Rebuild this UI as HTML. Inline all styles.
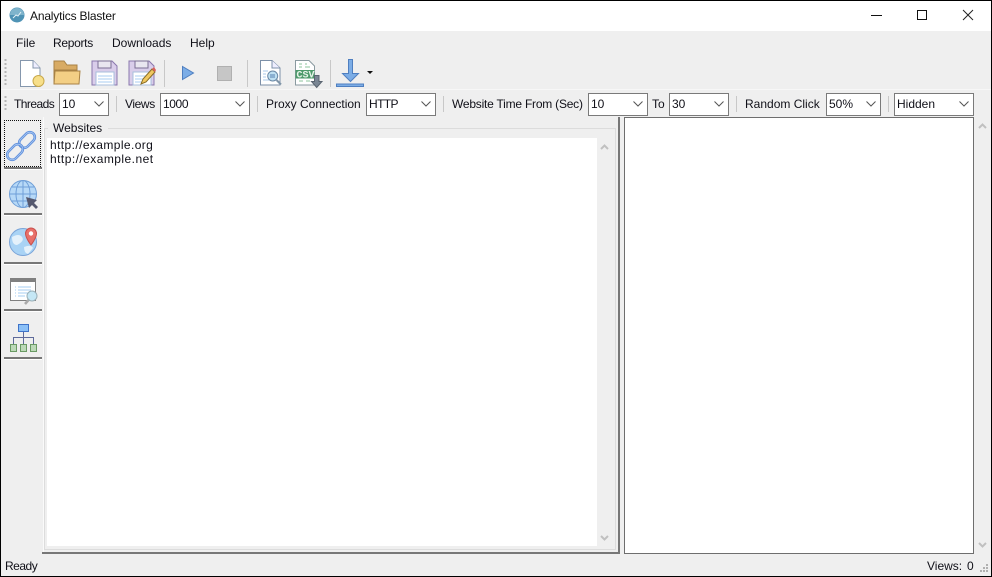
<!DOCTYPE html>
<html><head><meta charset="utf-8"><style>
html,body{margin:0;padding:0;background:#f0f0f0;overflow:hidden}
#w{position:relative;width:992px;height:577px;background:#efefef;overflow:hidden;font-family:"Liberation Sans",sans-serif;font-size:12px;color:#101018}
.t{position:absolute;white-space:nowrap;line-height:14px}
.a{position:absolute}
.c{position:absolute;top:93px;height:21px;border:1px solid #7a7a7a;background:#fff;box-sizing:content-box}
.c span{position:absolute;left:2px;top:3px;line-height:14px;white-space:nowrap}
.c svg{position:absolute;right:4px;top:7px}
.sep{position:absolute;width:1px;background:#c8c8c8}
svg{position:absolute;overflow:visible}
.sb{position:absolute;left:4px;width:38px;height:2px;background:#777;border-bottom:1px solid #fff}
</style></head><body><div id="w">
<div class="a" style="left:0;top:0;width:992px;height:31px;background:#fff"></div>
<svg style="left:9px;top:7px" width="16" height="16"><circle cx="8" cy="8" r="7.5" fill="#4f93b5"/><path d="M1 8a7 7 0 0 1 14 0z" fill="#7fb4cc"/><path d="M4 11l3-3 2 1 3-4" stroke="#e6f2f7" fill="none"/></svg>
<div class="t" style="left:30px;top:9px;color:#111;letter-spacing:-0.18px">Analytics Blaster</div>
<div class="a" style="left:871px;top:15px;width:11px;height:1px;background:#111"></div>
<div class="a" style="left:917px;top:10px;width:8px;height:8px;border:1px solid #111"></div>
<svg style="left:963px;top:10px" width="10" height="10"><path d="M0 0L10 10M10 0L0 10" stroke="#222"/></svg>

<div class="t" style="left:16px;top:36px">File</div>
<div class="t" style="left:53px;top:36px;letter-spacing:-0.3px">Reports</div>
<div class="t" style="left:112px;top:36px">Downloads</div>
<div class="t" style="left:190px;top:36px">Help</div>

<svg style="left:4px;top:58px" width="3" height="30"><path d="M1.5 1V29" stroke="#b5b5b5" stroke-width="2" stroke-dasharray="2 2"/></svg>
<svg style="left:4px;top:96px" width="3" height="16"><path d="M1.5 0V16" stroke="#b5b5b5" stroke-width="2" stroke-dasharray="2 2"/></svg>

<!-- new -->
<svg style="left:20px;top:60px" width="26" height="28"><path d="M0.5 0.5H13L20 8V26.500H0.500z" fill="#fff" stroke="#8597ad"/><path d="M13 0.500V8H20" fill="#eef" stroke="#8597ad"/><circle cx="18.500" cy="21" r="5.500" fill="#f7df8a" stroke="#c9a94a"/></svg>
<!-- open -->
<svg style="left:53px;top:60px" width="28" height="26"><path d="M1 24V1H11L14 5H24V10H1z" fill="#d8ab64" stroke="#a88245"/><path d="M1 24L2 11H27L26 24z" fill="#f3cf85" stroke="#a88245"/></svg>
<!-- save -->
<svg style="left:91px;top:60px" width="27" height="26"><path d="M1 1H21L26 6V25H1z" fill="#d9cdea" stroke="#8a78ad"/><rect x="7" y="1" width="13" height="7" fill="#e9e6f0" stroke="#7a6e94"/><rect x="5" y="12" width="18" height="13" fill="#fff" stroke="#a8bfdc"/><path d="M7 16H21M7 19H21M7 22H21" stroke="#a8cdf0"/></svg>
<!-- save as -->
<svg style="left:128px;top:60px" width="29" height="27"><path d="M1 1H21L26 6V25H1z" fill="#d9cdea" stroke="#8a78ad"/><rect x="7" y="1" width="13" height="7" fill="#e9e6f0" stroke="#7a6e94"/><rect x="5" y="12" width="18" height="13" fill="#fff" stroke="#a8bfdc"/><path d="M7 16H21M7 19H21M7 22H17" stroke="#a8cdf0"/><path d="M13 24L15 19L24 9L27 12L18 22z" fill="#f0c860" stroke="#8a6d25"/><path d="M24 9L26 7L28 10L27 12z" fill="#d9605a"/></svg>
<div class="sep" style="left:164px;top:60px;height:27px"></div>
<svg style="left:182px;top:66px" width="12" height="14"><path d="M0.5 0.5V13.5L11.5 7z" fill="#7cade6" stroke="#4f7fc0"/></svg>
<div class="a" style="left:217px;top:66px;width:13px;height:13px;background:#c6c6c6;border:1px solid #b0b0b0"></div>
<div class="sep" style="left:247px;top:60px;height:27px"></div>
<!-- report view -->
<svg style="left:260px;top:60px" width="22" height="26"><path d="M0.500 0.500H12L20 8V25H0.500z" fill="#fff" stroke="#7d90a8"/><path d="M12 0.500V8H20" fill="#eef" stroke="#7d90a8"/><path d="M3 11H8M3 14H6M3 17H6M3 20H9" stroke="#a8c8ea"/><circle cx="12.700" cy="16" r="5" fill="#bfe0f2" stroke="#6a88a5"/><path d="M10 15H15M10 17H15" stroke="#5580b0"/><path d="M16.500 20L21 24.500" stroke="#8095a8" stroke-width="2"/></svg>
<!-- csv -->
<svg style="left:295px;top:60px" width="28" height="28"><path d="M0.500 0.500H14L19.500 6V25H0.500z" fill="#fff" stroke="#8a9aa0"/><rect x="0.500" y="10" width="19" height="8.500" fill="#4d9a6a"/><path d="M4 4H7M10 4H12M4 7H7M10 7H15M4 21H8M11 21H15" stroke="#8cc49c"/><text x="1.500" y="17.500" font-family="Liberation Mono,monospace" font-size="10" font-weight="bold" fill="#e8f5ea">CSV</text><path d="M19.500 15.500H24V21.500H27L21.700 27.500L16.500 21.500H19.500z" fill="#7a8694" stroke="#5a6470"/></svg>
<div class="sep" style="left:330px;top:60px;height:27px"></div>
<!-- download -->
<svg style="left:336px;top:59px" width="38" height="28"><path d="M12.5 0.5H16.5V14.5H22.5L14.500 22.5L6.5 14.500H12.500z" fill="#7cade6" stroke="#4f7fc0"/><rect x="0.5" y="25" width="27" height="2.500" fill="#7cade6" stroke="#4f7fc0"/><path d="M31 12H37L34 15z" fill="#111"/></svg>

<div class="a" style="left:0;top:89px;width:992px;height:1px;background:#f7f7f7"></div>
<div class="t" style="left:14px;top:97px;letter-spacing:-0.55px">Threads</div>
<div class="c" style="left:59px;width:48px"><span>10</span><svg width="10" height="6"><path d="M0.500 0.500L5 5L9.500 0.500" stroke="#555" fill="none"/></svg></div>
<div class="sep" style="left:116px;top:96px;height:16px"></div>
<div class="t" style="left:125px;top:97px;letter-spacing:-0.4px">Views</div>
<div class="c" style="left:160px;width:88px"><span style="letter-spacing:-0.4px">1000</span><svg width="10" height="6"><path d="M0.500 0.500L5 5L9.500 0.500" stroke="#555" fill="none"/></svg></div>
<div class="sep" style="left:257px;top:96px;height:16px"></div>
<div class="t" style="left:266px;top:97px">Proxy Connection</div>
<div class="c" style="left:366px;width:68px"><span style="letter-spacing:-0.6px">HTTP</span><svg width="10" height="6"><path d="M0.500 0.500L5 5L9.500 0.500" stroke="#555" fill="none"/></svg></div>
<div class="sep" style="left:443px;top:96px;height:16px"></div>
<div class="t" style="left:452px;top:97px;letter-spacing:-0.22px">Website Time From (Sec)</div>
<div class="c" style="left:588px;width:58px"><span>10</span><svg width="10" height="6"><path d="M0.500 0.500L5 5L9.500 0.500" stroke="#555" fill="none"/></svg></div>
<div class="t" style="left:652px;top:97px">To</div>
<div class="c" style="left:669px;width:58px"><span>30</span><svg width="10" height="6"><path d="M0.500 0.500L5 5L9.500 0.500" stroke="#555" fill="none"/></svg></div>
<div class="sep" style="left:736px;top:96px;height:16px"></div>
<div class="t" style="left:745px;top:97px">Random Click</div>
<div class="c" style="left:826px;width:53px"><span>50%</span><svg width="10" height="6"><path d="M0.500 0.500L5 5L9.500 0.500" stroke="#555" fill="none"/></svg></div>
<div class="sep" style="left:888px;top:96px;height:16px"></div>
<div class="c" style="left:894px;width:78px"><span>Hidden</span><svg width="10" height="6"><path d="M0.500 0.500L5 5L9.500 0.500" stroke="#555" fill="none"/></svg></div>

<!-- left sidebar -->
<div class="a" style="left:4px;top:120px;width:35px;height:45px;border:1px dotted #111"></div>
<div class="sb" style="top:167px"></div><div class="sb" style="top:213px"></div><div class="sb" style="top:262px"></div><div class="sb" style="top:309px"></div><div class="sb" style="top:357px"></div>
<svg style="left:7px;top:131px" width="29" height="31"><g fill="none"><g transform="translate(20 9) rotate(45)"><rect x="-5" y="-9" width="10" height="18" rx="5" stroke="#5f8fdc" stroke-width="2.600"/><rect x="-5" y="-9" width="10" height="18" rx="5" stroke="#a9c8f2" stroke-width="0.800"/></g><g transform="translate(8 21) rotate(45)"><rect x="-5" y="-9" width="10" height="18" rx="5" stroke="#5f8fdc" stroke-width="2.600"/><rect x="-5" y="-9" width="10" height="18" rx="5" stroke="#a9c8f2" stroke-width="0.800"/></g></g></svg>
<svg style="left:9px;top:180px" width="30" height="30"><circle cx="14" cy="14" r="13.500" fill="#b7d9f7" stroke="#6f9fd8"/><path d="M14 1V27M1 14H27M3 7H25M3 21H25" stroke="#6f9fd8"/><ellipse cx="14" cy="14" rx="7" ry="13.500" fill="none" stroke="#6f9fd8"/><path d="M17 17L28 20L25 23L29 27L27 29L23 25L20 28z" fill="#55586e"/></svg>
<svg style="left:9px;top:227px" width="30" height="30"><circle cx="14" cy="15" r="13.500" fill="#a9d3f5" stroke="#7aa4d8"/><path d="M3 10Q10 6 13 10T8 18Q3 18 3 10M15 20Q22 17 24 21L19 27Q15 26 15 20" fill="#e4f1fb"/><path d="M22 1a5.500 5.500 0 0 1 5.500 5.500C27.500 11 22 18 22 18S16.500 11 16.500 6.500A5.500 5.500 0 0 1 22 1z" fill="#e8706a" stroke="#c9504c"/><circle cx="22" cy="6.500" r="2.200" fill="#fff"/></svg>
<svg style="left:10px;top:278px" width="29" height="28"><rect x="0.500" y="0.500" width="25" height="22" fill="#fff" stroke="#808080"/><rect x="0" y="0" width="26" height="4" fill="#808080"/><path d="M8 9H21M8 12H21M8 15H18M8 18H15" stroke="#a5cdf2"/><path d="M5 9H6M5 12H6M5 15H6M5 18H6" stroke="#a5cdf2"/><path d="M18.500 22L15 26" stroke="#aaa" stroke-width="2.500"/><circle cx="22" cy="18" r="5" fill="#c5e7f5" stroke="#9ab0b8"/></svg>
<svg style="left:10px;top:324px" width="28" height="28"><rect x="8.500" y="0.500" width="10" height="7" fill="#8bc0f7" stroke="#3f73c8"/><path d="M13.500 8V20M3.500 20V13.500H23.500V20" fill="none" stroke="#5e6a9a"/><rect x="0.500" y="20.500" width="6" height="7" fill="#bcd9b8" stroke="#6a9a64"/><rect x="10.500" y="20.500" width="6" height="7" fill="#bcd9b8" stroke="#6a9a64"/><rect x="20.500" y="20.500" width="6" height="7" fill="#bcd9b8" stroke="#6a9a64"/></svg>

<!-- left panel -->
<div class="a" style="left:43px;top:117px;width:1px;height:435px;background:#fafafa"></div>
<div class="a" style="left:42px;top:552px;width:578px;height:2px;background:#777"></div>
<div class="a" style="left:618px;top:117px;width:2px;height:437px;background:#777"></div>
<div class="a" style="left:44px;top:128px;width:570px;height:420px;border:1px solid #dcdcdc"></div>
<div class="a" style="left:48px;top:120px;width:60px;height:14px;background:#efefef"></div>
<div class="t" style="left:53px;top:121px">Websites</div>
<div class="a" style="left:47px;top:138px;width:550px;height:408px;background:#fff"></div>
<div class="t" style="left:50px;top:138px;letter-spacing:0.4px">http://example.org</div>
<div class="t" style="left:50px;top:152px;letter-spacing:0.45px">http://example.net</div>
<svg style="left:600px;top:144px" width="9" height="6"><path d="M1 5L4.500 1.500L8 5" stroke="#c0c0c0" stroke-width="2" fill="none"/></svg>
<svg style="left:600px;top:535px" width="9" height="6"><path d="M1 1L4.500 4.500L8 1" stroke="#c0c0c0" stroke-width="2" fill="none"/></svg>

<!-- right panel -->
<div class="a" style="left:624px;top:117px;width:348px;height:435px;background:#fff;border:1px solid #6e6e6e"></div>
<svg style="left:978px;top:123px" width="9" height="6"><path d="M1 5L4.500 1.500L8 5" stroke="#c0c0c0" stroke-width="2" fill="none"/></svg>
<svg style="left:978px;top:542px" width="9" height="6"><path d="M1 1L4.500 4.500L8 1" stroke="#c0c0c0" stroke-width="2" fill="none"/></svg>

<!-- status -->
<div class="t" style="left:5px;top:559px;letter-spacing:-0.5px">Ready</div>
<div class="t" style="left:927px;top:559px">Views:</div>
<div class="t" style="left:967px;top:559px">0</div>
<svg style="left:979px;top:563px" width="10" height="10"><path d="M7 1h2v2h-2zM4 4h2v2h-2zM7 4h2v2h-2zM1 7h2v2h-2zM4 7h2v2h-2zM7 7h2v2h-2z" fill="#b0b0b0"/></svg>

<div class="a" style="left:0;top:0;width:990px;height:575px;border:1px solid #000"></div>
</div></body></html>
